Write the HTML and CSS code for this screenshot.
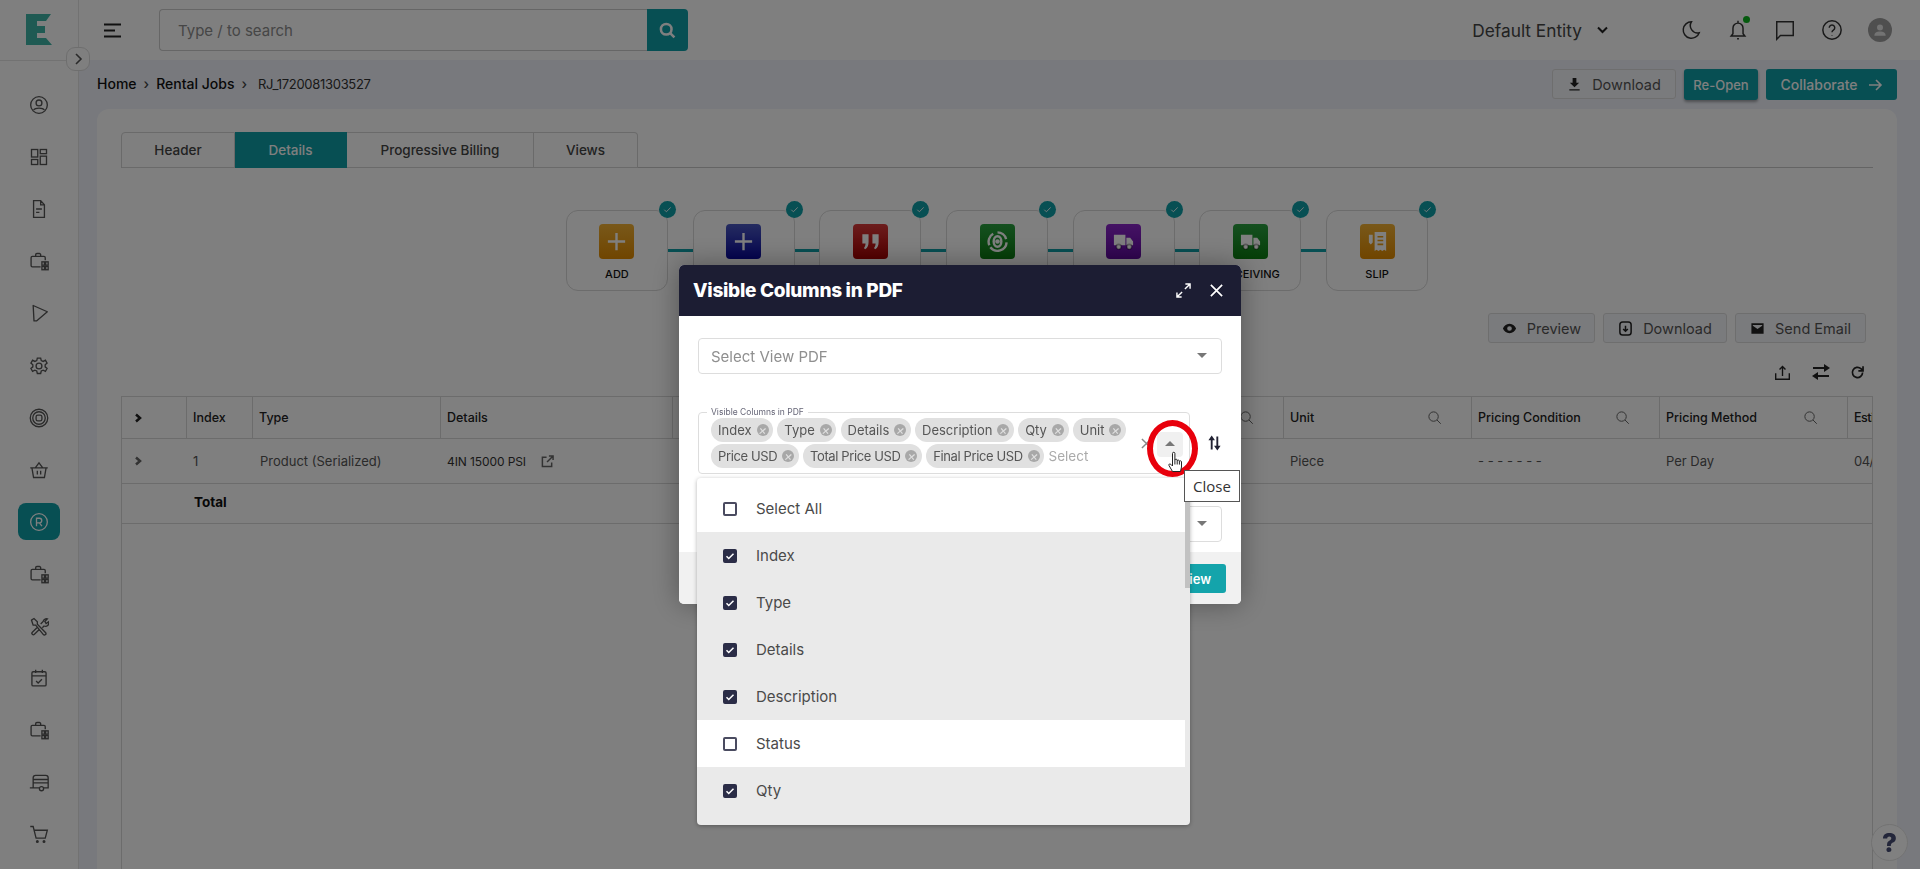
FILE: index.html
```html
<!DOCTYPE html>
<html lang="en">
<head>
    <meta charset="UTF-8">
    <meta name="viewport" content="width=device-width, initial-scale=1.0">
    <title>Rental Jobs</title>
    <link rel="stylesheet" href="styles.css">
</head>
<body>
    <svg class="sprite" width="0" height="0">
        <symbol id="i-case" viewBox="0 0 24 24"><path d="M14 19H4a1.500 1.500 0 0 1-1.500-1.500V8A1.500 1.500 0 0 1 4 6.500h14A1.500 1.500 0 0 1 19.500 8v3M8 6.500V4.500A1.500 1.500 0 0 1 9.500 3h3A1.500 1.500 0 0 1 14 4.500v2"/><rect x="15.500" y="13" width="3" height="4"/><rect x="20" y="13" width="3" height="4"/><rect x="15.500" y="18.500" width="3" height="4"/><rect x="20" y="18.500" width="3" height="4"/></symbol>
        <symbol id="i-truck" viewBox="0 0 24 24"><path fill="currentColor" stroke="none" d="M2 5h12v11H2zM15 8h4l3 4v4h-7z"/><circle cx="7" cy="17.500" r="2.500" fill="currentColor" stroke="#000" stroke-opacity=".3"/><circle cx="18" cy="17.500" r="2.500" fill="currentColor" stroke="#000" stroke-opacity=".3"/></symbol>
        <symbol id="i-lens" viewBox="0 0 24 24"><circle cx="10.500" cy="10.500" r="7.500"/><path d="M16 16l6 6"/></symbol>
        <symbol id="i-plus" viewBox="0 0 24 24"><path d="M12 3v18M3 12h18"/></symbol>
        <symbol id="i-check" viewBox="0 0 24 24"><path d="M5 12.500l4.500 4.500L19 7.500"/></symbol>
    </svg>

    <div class="app">
        <aside class="sidebar">
            <div class="logo">
                <svg width="26" height="31" viewBox="0 0 26 31"><path d="M0 0h25l-5 7h-9v5h8v7h-8v5h9l6 7H0z"/></svg>
            </div>
            <nav class="nav">
                <a class="nav-item"><svg viewBox="0 0 24 24"><circle cx="12" cy="12" r="10"/><circle cx="12" cy="9.500" r="3.500"/><path d="M5.500 18c2-3 11-3 13 0"/></svg></a>
                <a class="nav-item"><svg viewBox="0 0 24 24"><rect x="3" y="3" width="7.500" height="9"/><rect x="13.500" y="3" width="7.500" height="5"/><rect x="3" y="15" width="7.500" height="6"/><rect x="13.500" y="11" width="7.500" height="10"/></svg></a>
                <a class="nav-item"><svg viewBox="0 0 24 24"><path d="M14 2H5.500v20h13V7zM14 2v5h4.500M8.500 12h7M8.500 16h4"/></svg></a>
                <a class="nav-item"><svg><use href="#i-case"/></svg></a>
                <a class="nav-item"><svg viewBox="0 0 24 24"><path d="M5 3l17 7.500L9 21.500H6z" stroke-linejoin="round"/></svg></a>
                <a class="nav-item"><svg viewBox="0 0 24 24"><circle cx="12" cy="12" r="3.500"/><path d="M10 2.500h4l.7 3 2.300 1 2.700-1.500 2 3.500-2.300 2v2.500l2.300 2-2 3.500-2.700-1.500-2.300 1-.7 3h-4l-.7-3-2.300-1-2.700 1.500-2-3.500 2.300-2v-2.500l-2.300-2 2-3.500L7 6.500l2.300-1z"/></svg></a>
                <a class="nav-item"><svg viewBox="0 0 24 24"><circle cx="12" cy="12" r="10.500"/><circle cx="12" cy="12" r="7.500"/><rect x="8.500" y="8.500" width="7" height="7" rx="2"/></svg></a>
                <a class="nav-item"><svg viewBox="0 0 24 24"><path d="M1.500 9.500h21M3.500 9.500l2 11.500h13l2-11.500M7.500 9.500L12 3.500l4.500 6M10 13v4.500M14 13v4.500"/></svg></a>
                <a class="nav-item nav-active"><svg viewBox="0 0 24 24"><circle cx="12" cy="12" r="10"/><path d="M9 17V7.500h3.500a2.800 2.800 0 0 1 0 5.600H9M12.500 13l3 4"/></svg></a>
                <a class="nav-item"><svg><use href="#i-case"/></svg></a>
                <a class="nav-item"><svg viewBox="0 0 24 24"><path d="M3 5l3-2 4 4v3L20 20a1.500 1.500 0 0 1-3 2L8 11H5zM14 9.500l3-3a4 4 0 0 1 5-3l-3 3 1.500 2.500 3-2a4 4 0 0 1-5.500 5l-2 2M9.500 14l-5.500 5.500a1.500 1.500 0 0 0 2.500 2.500L12 16.500"/></svg></a>
                <a class="nav-item"><svg viewBox="0 0 24 24"><rect x="3.500" y="4.500" width="17" height="17" rx="1.500"/><path d="M3.500 9.500h17M8 2v4M16 2v4M8.500 15.500l2.500 2.500 4.500-4.500"/></svg></a>
                <a class="nav-item"><svg><use href="#i-case"/></svg></a>
                <a class="nav-item"><svg viewBox="0 0 24 24" stroke-width="2"><path d="M5 19V7a3 3 0 0 1 3-3h12a3 3 0 0 1 3 3v12h-5M5 9h18M5 13h18M1 19h11"/><circle cx="15" cy="20" r="2.500"/></svg></a>
                <a class="nav-item"><svg viewBox="0 0 24 24"><path d="M1.500 3h3.500l3.500 14h11l2.500-9.500H6"/><circle cx="10" cy="21" r="1" fill="currentColor"/><circle cx="18" cy="21" r="1" fill="currentColor"/></svg></a>
            </nav>
        </aside>
        <button class="side-toggle"><svg width="9" height="14" viewBox="0 0 9 14"><path d="M2 2l5 5-5 5"/></svg></button>

        <div class="main">
            <header class="topbar">
                <svg class="menu-icon" width="18" height="15" viewBox="0 0 18 15"><path d="M0 1.500h17M0 7.500h11M0 13.500h17"/></svg>
                <div class="search">
                    <input class="search-input" type="text" placeholder="Type / to search">
                    <button class="search-btn"><svg width="17" height="17" viewBox="0 0 16 16"><circle cx="6.800" cy="6.800" r="5"/><path d="M10.500 10.500l4 4"/></svg></button>
                </div>
                <div class="entity">
                    <span>Default Entity</span>
                    <svg width="13" height="8" viewBox="0 0 12 8"><path d="M1.500 1.500L6 6l4.500-4.500"/></svg>
                </div>
                <div class="top-icons">
                    <svg viewBox="0 0 24 24"><path d="M12.500 3a9 9 0 1 0 8.500 12A8 8 0 0 1 12.500 3z"/></svg>
                    <span class="bell">
                        <svg viewBox="0 0 24 24"><path d="M4.500 18.500h15l-2-2.500V10a5.500 5.500 0 0 0-11 0v6zM12 2v2.500M11 21.500h2"/></svg>
                        <i class="bell-dot"></i>
                    </span>
                    <svg viewBox="0 0 24 24"><path d="M3 3h18v15H7l-4 4z"/></svg>
                    <svg viewBox="0 0 24 24"><circle cx="12" cy="12" r="10"/><path d="M9 9.500a3 3 0 1 1 4.500 2.600c-1 .6-1.500 1.200-1.500 2.400M12 17.500v.5"/></svg>
                    <span class="avatar"><svg viewBox="0 0 24 24"><circle cx="12" cy="8.500" r="4"/><path d="M4.500 19.500c0-4 3-5.500 7.500-5.500s7.500 1.500 7.500 5.500z"/></svg></span>
                </div>
            </header>

            <div class="crumb-row">
                <div class="crumbs">
                    <a>Home</a><span class="crumb-sep">›</span><a>Rental Jobs</a><span class="crumb-sep crumb-sep-last">›</span><span class="crumb-last">RJ_1720081303527</span>
                </div>
                <div class="crumb-actions">
                    <button class="btn-light btn-dl"><svg class="solid-icon" viewBox="0 0 16 16"><path d="M6 1h4v5h3l-5 5-5-5h3zM2.500 13h11v1.500h-11z"/></svg>Download</button>
                    <button class="btn-teal btn-reopen">Re-Open</button>
                    <button class="btn-teal btn-collab">Collaborate <svg width="15" height="14" viewBox="0 0 15 14"><path d="M1 7h12M8 2l5 5-5 5"/></svg></button>
                </div>
            </div>

            <section class="card">
                <div class="tabs">
                    <a class="tab tab-header">Header</a>
                    <a class="tab tab-active tab-details">Details</a>
                    <a class="tab tab-billing">Progressive Billing</a>
                    <a class="tab tab-views">Views</a>
                </div>

                <div class="stepper">
                    <div class="step"><i class="step-check"><svg><use href="#i-check"/></svg></i><span class="step-icon amber"><svg class="white-line"><use href="#i-plus"/></svg></span><b>ADD</b></div>
                    <i class="step-line"></i>
                    <div class="step"><i class="step-check"><svg><use href="#i-check"/></svg></i><span class="step-icon blue"><svg class="white-line"><use href="#i-plus"/></svg></span><b>JOB</b></div>
                    <i class="step-line"></i>
                    <div class="step"><i class="step-check"><svg><use href="#i-check"/></svg></i><span class="step-icon red"><svg viewBox="0 0 24 24"><path class="white-fill" d="M3.500 4.500h6.500v8c0 3.500-1 6-3.500 7.500l-1.500-1.200c1.200-1.300 1.800-2.800 1.800-4.800H3.500zM14 4.500h6.500v8c0 3.500-1 6-3.500 7.500l-1.500-1.200c1.200-1.300 1.800-2.800 1.800-4.800H14z"/></svg></span><b>QUOTE</b></div>
                    <i class="step-line"></i>
                    <div class="step"><i class="step-check"><svg><use href="#i-check"/></svg></i><span class="step-icon green"><svg class="white-line" viewBox="0 0 24 24"><path d="M12 2.500a9.500 9.500 0 0 1 9 7M21.500 13a9.500 9.500 0 0 1-17 5M3.500 16a9.500 9.500 0 0 1 4-12"/><ellipse cx="12" cy="12" rx="4" ry="5.500"/><circle cx="12" cy="12" r="1.200"/></svg></span><b>ORDER</b></div>
                    <i class="step-line"></i>
                    <div class="step"><i class="step-check"><svg><use href="#i-check"/></svg></i><span class="step-icon purple"><svg class="truck"><use href="#i-truck"/></svg></span><b>SHIPPING</b></div>
                    <i class="step-line"></i>
                    <div class="step"><i class="step-check"><svg><use href="#i-check"/></svg></i><span class="step-icon green"><svg class="truck"><use href="#i-truck"/></svg></span><b>RECEIVING</b></div>
                    <i class="step-line"></i>
                    <div class="step"><i class="step-check"><svg><use href="#i-check"/></svg></i><span class="step-icon amber"><svg viewBox="0 0 24 24"><path class="white-fill" d="M9 2h12v20l-2-1.500-2 1.500-2-1.500-2 1.500-2-1.500L9 22zM3 5h4v8l-2 2-2-2z"/><path class="amber-line" d="M12 7h6M12 11h6M12 15h6"/></svg></span><b>SLIP</b></div>
                </div>

                <div class="doc-actions">
                    <button class="btn-light btn-preview"><svg class="solid-icon" viewBox="0 0 16 16"><path fill-rule="evenodd" d="M8 3c3.500 0 6 2.500 7 5-1 2.500-3.500 5-7 5s-6-2.500-7-5c1-2.500 3.500-5 7-5zm0 2.500a2.500 2.500 0 1 0 0 5 2.500 2.500 0 0 0 0-5z"/></svg>Preview</button>
                    <button class="btn-light btn-down"><svg viewBox="0 0 16 16"><rect x="2" y="1" width="12" height="14" rx="3"/><path d="M8 5v6M5.500 8.500L8 11l2.500-2.500"/></svg>Download</button>
                    <button class="btn-light btn-mail"><svg class="solid-icon" viewBox="0 0 16 16"><path fill-rule="evenodd" d="M1.500 2.500h13v11h-13zM3 5l5 3.500L13 5v-.8H3z"/></svg>Send Email</button>
                </div>

                <div class="table-tools">
                    <svg viewBox="0 0 20 20"><path d="M2 11v7h16v-7M10 14V3M6.500 6.500L10 3l3.500 3.500"/></svg>
                    <svg class="swap" viewBox="0 0 20 20"><path d="M2 6h12M18 14H6" stroke-width="2"/><path class="solid-icon" d="M13 2l6 4-6 4zM7 10l-6 4 6 4z"/></svg>
                    <svg viewBox="0 0 20 20"><path d="M16 10a6 6 0 1 1-2-4.500L16.500 8M16.500 2.500V8H11" stroke-width="2"/></svg>
                </div>

                <div class="table">
                    <div class="tr th-row">
                        <div class="cell c-arrow"><svg class="row-arrow" viewBox="0 0 10 10"><path d="M3 1.500L7 5 3 8.500"/></svg></div>
                        <div class="cell c-index">Index</div>
                        <div class="cell c-type">Type</div>
                        <div class="cell c-details">Details</div>
                        <div class="cell c-desc">Description<svg class="th-lens"><use href="#i-lens"/></svg></div>
                        <div class="cell c-qty">Qty<svg class="th-lens"><use href="#i-lens"/></svg></div>
                        <div class="cell c-unit">Unit<svg class="th-lens"><use href="#i-lens"/></svg></div>
                        <div class="cell c-unit">Pricing Condition<svg class="th-lens"><use href="#i-lens"/></svg></div>
                        <div class="cell c-unit">Pricing Method<svg class="th-lens"><use href="#i-lens"/></svg></div>
                        <div class="cell c-est">Esti</div>
                    </div>
                    <div class="tr td-row">
                        <div class="cell c-arrow"><svg class="row-arrow row-arrow-soft" viewBox="0 0 10 10"><path d="M3 1.500L7 5 3 8.500"/></svg></div>
                        <div class="cell c-index">1</div>
                        <div class="cell c-type">Product (Serialized)</div>
                        <div class="cell c-details"><span class="part-no">4IN 15000 PSI</span> <svg class="ext-link" viewBox="0 0 14 14"><path d="M6 2.500H1.500v10h10V8M8.500 1h4.500v4.500M13 1L6.500 7.500"/></svg></div>
                        <div class="cell c-desc"></div>
                        <div class="cell c-qty"></div>
                        <div class="cell c-unit">Piece</div>
                        <div class="cell c-unit">- - - - - - -</div>
                        <div class="cell c-unit">Per Day</div>
                        <div class="cell c-est">04/</div>
                    </div>
                    <div class="total-row"><b>Total</b></div>
                </div>
            </section>
        </div>
    </div>

    <div class="overlay">
        <div class="modal">
            <div class="modal-head">
                <h2>Visible Columns in PDF</h2>
                <svg class="head-icon" viewBox="0 0 16 16"><path d="M9.500 6.500L15 1M10 1h5v5M6.500 9.500L1 15M1 10v5h5"/></svg>
                <svg class="head-icon head-close" viewBox="0 0 16 16"><path d="M2 2l12 12M14 2L2 14"/></svg>
            </div>
            <div class="modal-body">
                <div class="select-box">Select View PDF<i class="caret"></i></div>
                <div class="multi-row">
                    <div class="multi-field">
                        <span class="legend">Visible Columns in PDF</span>
                        <div class="chips">
                            <span class="chip">Index<i class="chip-x"></i></span>
                            <span class="chip">Type<i class="chip-x"></i></span>
                            <span class="chip">Details<i class="chip-x"></i></span>
                            <span class="chip">Description<i class="chip-x"></i></span>
                            <span class="chip">Qty<i class="chip-x"></i></span>
                            <span class="chip">Unit<i class="chip-x"></i></span>
                            <span class="chip chip-usd">Price USD<i class="chip-x"></i></span>
                            <span class="chip chip-usd">Total Price USD<i class="chip-x"></i></span>
                            <span class="chip chip-usd">Final Price USD<i class="chip-x"></i></span>
                            <span class="chip-ph">Select</span>
                        </div>
                        <svg class="clear-x" viewBox="0 0 12 12"><path d="M1 1l10 10M11 1L1 11"/></svg>
                        <span class="caret-btn"><i class="caret caret-up"></i></span>
                    </div>
                    <svg class="sort-icon" viewBox="0 0 16 18"><path d="M5 16V4M11 2v12" stroke-width="2"/><path class="solid-icon" d="M1.500 6L5 1l3.500 5zM7.500 12h7L11 17z"/></svg>
                </div>
                <div class="select-box select-low"><i class="caret"></i></div>
            </div>
            <div class="modal-foot"><button class="btn-preview-main">Preview</button></div>
        </div>

        <div class="dropdown">
            <div class="dd-row"><i class="box"></i>Select All</div>
            <div class="dd-row dd-on"><i class="box box-on"><svg><use href="#i-check"/></svg></i>Index</div>
            <div class="dd-row dd-on"><i class="box box-on"><svg><use href="#i-check"/></svg></i>Type</div>
            <div class="dd-row dd-on"><i class="box box-on"><svg><use href="#i-check"/></svg></i>Details</div>
            <div class="dd-row dd-on"><i class="box box-on"><svg><use href="#i-check"/></svg></i>Description</div>
            <div class="dd-row"><i class="box"></i>Status</div>
            <div class="dd-row dd-on"><i class="box box-on"><svg><use href="#i-check"/></svg></i>Qty</div>
            <i class="dd-thumb"></i>
        </div>

        <i class="red-ring"></i>
        <svg class="hand" viewBox="0 0 16 22"><path d="M5 20.500l-3.500-6c-.6-1.200.8-2.200 1.800-1.200L5 15V2.500a1.200 1.200 0 0 1 2.400 0V9a1.200 1.200 0 0 1 2.300 0v.8a1.200 1.200 0 0 1 2.200 0v.8a1.100 1.100 0 0 1 2.100 0V16l-1 4.500zM7.400 9v4.500M9.700 9.800v3.700M11.900 10.600v3"/></svg>
        <div class="tooltip">Close</div>
    </div>

    <button class="help-fab">?</button>
</body>
</html>
```

FILE: styles.css
```css
* {
    box-sizing: border-box;
}

body {
    margin: 0;
    height: 869px;
    overflow: hidden;
    font-family: Inter, "Open Sans", sans-serif;
    color: #333;
    background: #f0f3fb;
}

.sprite {
    position: absolute;
}

button {
    font-family: inherit;
    cursor: pointer;
}

svg {
    fill: none;
    stroke: currentColor;
    stroke-width: 1.6;
}

.app {
    display: flex;
    height: 869px;
}

/* sidebar */
.sidebar {
    width: 79px;
    flex-shrink: 0;
    background: #fff;
    border-right: 1px solid #e4e4e4;
}

.logo {
    height: 61px;
    padding: 14px 0 0 26px;
    border-bottom: 1px solid #e4e4e4;
}

.logo svg {
    display: block;
    stroke: none;
    fill: #3fb5a6;
}

.nav {
    padding-top: 18px;
    display: grid;
    grid-auto-rows: 52.1px;
    justify-items: center;
    align-items: center;
}

.nav-item {
    width: 42px;
    height: 37px;
    display: flex;
    align-items: center;
    justify-content: center;
    color: #555;
    border-radius: 8px;
}

.nav-item svg {
    width: 20px;
    height: 20px;
}

.nav-active {
    background: #0e9ea6;
    color: #fff;
}

.side-toggle {
    position: absolute;
    left: 66px;
    top: 47px;
    width: 24px;
    height: 24px;
    padding: 0;
    display: flex;
    align-items: center;
    justify-content: center;
    background: #fff;
    border: 1px solid #ddd;
    border-radius: 9px;
    color: #555;
}

/* top bar */
.main {
    flex: 1;
    min-width: 0;
}

.topbar {
    height: 60px;
    background: #fff;
    display: flex;
    align-items: center;
    padding: 0 28px 0 25px;
}

.menu-icon {
    stroke-width: 2;
    color: #222;
}

.search {
    display: flex;
    width: 529px;
    height: 42px;
    margin-left: 37px;
}

.search-input {
    flex: 1;
    min-width: 0;
    border: 1px solid #ccc;
    border-right: 0;
    border-radius: 4px 0 0 4px;
    padding: 0 18px;
    font: 15px Inter, sans-serif;
}

.search-input::placeholder {
    color: #8c8c8c;
}

.search-btn {
    width: 41px;
    border: 0;
    padding: 0;
    background: #0e9ea6;
    border-radius: 0 4px 4px 0;
    color: #fff;
}

.search-btn svg {
    stroke-width: 2.4;
    vertical-align: middle;
}

.entity {
    margin-left: auto;
    display: flex;
    align-items: center;
    gap: 14px;
    font-size: 17.300px;
    color: #444;
}

.entity svg {
    stroke-width: 2;
    color: #222;
}

.top-icons {
    display: flex;
    align-items: center;
    gap: 25px;
    margin-left: 71px;
    color: #333;
}

.top-icons > svg,
.bell > svg {
    display: block;
    width: 22px;
    height: 22px;
}

.bell {
    position: relative;
}

.bell-dot {
    position: absolute;
    right: -1px;
    top: -3px;
    width: 7px;
    height: 7px;
    border-radius: 50%;
    background: #0bb51d;
}

.avatar {
    width: 24px;
    height: 24px;
    border-radius: 50%;
    background: #9e9e9e;
    display: block;
    padding: 3px;
}

.avatar svg {
    display: block;
    fill: #e6e6e6;
    stroke: none;
}

/* breadcrumb */
.crumb-row {
    display: flex;
    align-items: flex-start;
    height: 49px;
    padding: 9px 23px 0 18px;
}

.crumbs {
    font-size: 14px;
    font-weight: 500;
    line-height: 30px;
    color: #111;
}

.crumb-sep {
    margin: 0 7px;
    color: #444;
}

.crumb-sep-last {
    margin-right: 11px;
}

.crumb-last {
    font-size: 13px;
    letter-spacing: -0.3px;
    font-weight: 400;
    color: #333;
}

.crumb-actions {
    margin-left: auto;
    display: flex;
    gap: 8px;
}

.btn-light {
    height: 30px;
    display: flex;
    align-items: center;
    justify-content: center;
    gap: 10px;
    background: #f5f6fa;
    border: 1px solid #ddd;
    border-radius: 3px;
    font-size: 14.500px;
    color: #555;
    padding: 0;
}

.btn-light svg {
    width: 15px;
    height: 15px;
    color: #222;
}

.solid-icon {
    fill: #222;
    stroke: none;
}

.btn-teal {
    height: 31px;
    display: flex;
    align-items: center;
    justify-content: center;
    gap: 10px;
    border: 0;
    border-radius: 3px;
    background: #0e9ea6;
    color: #fff;
    font-weight: 500;
    font-size: 14px;
    padding: 0;
}

.btn-dl {
    width: 124px;
}

.btn-reopen {
    width: 74px;
    font-size: 13px;
    box-shadow: 0 2px 3px rgba(0, 0, 0, 0.35);
}

.btn-collab {
    width: 131px;
}

/* card */
.card {
    display: flex;
    flex-direction: column;
    margin: 0 23px 0 18px;
    height: 760px;
    background: #fff;
    border-radius: 12px 12px 0 0;
    padding: 23px 24px 0;
    overflow: hidden;
}

.tabs {
    display: flex;
    height: 36px;
    flex-shrink: 0;
    border-bottom: 1px solid #c8c8c8;
}

.tab {
    height: 36px;
    display: flex;
    align-items: center;
    justify-content: center;
    font-size: 13.500px;
    font-weight: 500;
    color: #444;
    border: 1px solid #d4d4d4;
    border-left: 0;
}

.tab-active {
    background: #0e9ea6;
    border-color: #0e9ea6;
    color: #fff;
}

.tab-header {
    width: 114px;
    border-left: 1px solid #d4d4d4;
    border-radius: 4px 0 0 0;
}

.tab-details {
    width: 112px;
}

.tab-billing {
    width: 187px;
}

.tab-views {
    width: 104px;
    border-radius: 0 4px 0 0;
}

/* stepper */
.stepper {
    margin-top: 42px;
    height: 81px;
    flex-shrink: 0;
    display: flex;
    justify-content: center;
    align-items: center;
}

.step {
    position: relative;
    width: 102px;
    height: 81px;
    border: 1px solid #d8d8d8;
    border-radius: 12px;
    padding-top: 13px;
    display: flex;
    flex-direction: column;
    align-items: center;
}

.step b {
    margin-top: 8px;
    font-size: 11px;
    font-weight: 500;
    color: #111;
}

.step-line {
    width: 24.700px;
    height: 3px;
    background: #0e9ea6;
}

.step-check {
    position: absolute;
    right: -9px;
    top: -10px;
    width: 17px;
    height: 17px;
    border-radius: 50%;
    background: #0e9ea6;
    padding: 3px;
    color: #fff;
}

.step-check svg {
    display: block;
    width: 11px;
    height: 11px;
    stroke-width: 2;
}

.step-icon {
    width: 35px;
    height: 35px;
    border-radius: 4px;
    padding: 6px;
    color: #fff;
}

.step-icon svg {
    display: block;
    width: 23px;
    height: 23px;
}

.white-line {
    stroke-width: 2.500;
    color: #fff;
}

.white-fill {
    fill: #fff;
    stroke: none;
}

.amber-line {
    stroke: #e99a10;
}

.truck {
    stroke: none;
    color: #fff;
}

.amber {
    background: linear-gradient(#f2b134, #e08a00);
}

.blue {
    background: linear-gradient(#4a58c0, #0808a0);
}

.red {
    background: linear-gradient(#d83a3a, #a80000);
}

.green {
    background: linear-gradient(#2aa040, #0a7d10);
}

.purple {
    background: linear-gradient(#8a25c8, #600aa0);
}

/* doc actions */
.doc-actions {
    margin-top: 22px;
    display: flex;
    flex-shrink: 0;
    justify-content: flex-end;
    gap: 8px;
    padding-right: 7px;
}

.btn-preview {
    width: 107px;
}

.btn-down {
    width: 124px;
}

.btn-mail {
    width: 131px;
}

.table-tools {
    margin-top: 19px;
    height: 20px;
    flex-shrink: 0;
    display: flex;
    justify-content: flex-end;
    align-items: center;
    gap: 20px;
    padding-right: 7px;
    color: #222;
}

.table-tools svg {
    width: 17px;
    height: 17px;
}

.table-tools .swap {
    width: 20px;
    height: 20px;
    margin: 0 -2px 0 0;
}

/* table */
.table {
    flex: 1;
    margin-top: 14px;
    border: 1px solid #d8d8d8;
    border-width: 1px 1px 0;
    overflow: hidden;
    font-size: 13px;
}

.tr {
    display: flex;
    border-bottom: 1px solid #d8d8d8;
}

.th-row {
    height: 42px;
    font-size: 12.500px;
    font-weight: 500;
    color: #222;
}

.td-row {
    height: 45px;
    color: #555;
}

.cell {
    flex-shrink: 0;
    display: flex;
    align-items: center;
    padding: 0 6px;
    white-space: nowrap;
}

.th-row .cell {
    border-right: 1px solid #d8d8d8;
    justify-content: space-between;
}

.td-row .c-type {
    padding-left: 7px;
}

.c-arrow {
    width: 65px;
    padding-left: 11px;
}

.c-index {
    width: 66px;
}

.c-type {
    width: 188px;
}

.c-details {
    width: 232px;
}

.td-row .c-details {
    color: #333;
    justify-content: flex-start;
    gap: 15px;
}

.part-no {
    font-size: 12px;
    letter-spacing: -0.1px;
}

.c-desc {
    width: 300px;
}

.c-qty {
    width: 311px;
}

.c-unit {
    width: 188px;
}

.c-est {
    width: 40px;
    letter-spacing: -0.5px;
}

.th-lens {
    width: 15px;
    height: 15px;
    margin-right: 23px;
    color: #666;
    stroke-width: 1.6;
}

.row-arrow {
    width: 10px;
    height: 10px;
    stroke-width: 2.500;
    color: #222;
}

.row-arrow-soft {
    color: #666;
}

.ext-link {
    width: 13px;
    height: 13px;
    color: #666;
}

.total-row {
    height: 40px;
    padding: 0 0 4px 72px;
    display: flex;
    align-items: center;
    border-bottom: 1px solid #d8d8d8;
    font-size: 13.500px;
    color: #111;
}

/* overlay and modal */
.overlay {
    position: fixed;
    left: 0;
    top: 0;
    width: 1920px;
    height: 869px;
    background: rgba(0, 0, 0, 0.5);
}

.modal {
    position: absolute;
    left: 679px;
    top: 265px;
    width: 562px;
    height: 339px;
    background: #fff;
    border-radius: 5px;
    overflow: hidden;
    box-shadow: 0 0 28px rgba(0, 0, 0, 0.35);
    display: flex;
    flex-direction: column;
}

.modal-head {
    height: 51px;
    flex-shrink: 0;
    background: #1c1d33;
    color: #fff;
    display: flex;
    align-items: center;
    padding: 0 17px 0 14px;
}

.modal-head h2 {
    margin: 0 auto 0 0;
    font-size: 19px;
    font-weight: 800;
    letter-spacing: -0.3px;
}

.head-icon {
    width: 15px;
    height: 15px;
    stroke-width: 1.500;
}

.head-close {
    margin-left: 18px;
    stroke-width: 1.800;
}

.modal-body {
    flex: 1;
    padding: 22px 19px 0;
}

.select-box {
    position: relative;
    height: 36px;
    border: 1px solid #ddd;
    border-radius: 4px;
    padding: 0 12px;
    line-height: 36px;
    font-size: 15px;
    color: #8f8f8f;
}

.select-low {
    margin-top: 32px;
}

.caret {
    position: absolute;
    right: 14px;
    top: 14px;
    width: 0;
    height: 0;
    border: 5px solid transparent;
    border-top: 5px solid #777;
    border-bottom: 0;
}

.multi-row {
    display: flex;
    align-items: center;
    margin-top: 38px;
}

.multi-field {
    position: relative;
    width: 492px;
    height: 62px;
    border: 1px solid #ddd;
    border-radius: 4px;
    padding: 5px 0 0 12px;
}

.legend {
    position: absolute;
    left: 8px;
    top: -6px;
    background: #fff;
    padding: 0 4px;
    font-size: 8.500px;
    color: #667;
}

.chips {
    width: 425px;
    display: flex;
    flex-wrap: wrap;
    align-items: center;
    gap: 2px 4.200px;
}

.chip {
    height: 24px;
    display: flex;
    align-items: center;
    gap: 5px;
    padding: 0 4.600px 0 7px;
    background: #e0e0e0;
    border-radius: 12px;
    font-size: 13px;
    color: #555;
}

.chip-usd {
    letter-spacing: -0.38px;
}

.chip-x {
    position: relative;
    width: 12px;
    height: 12px;
    border-radius: 50%;
    background: #a8a8a8;
}

.chip-x::before {
    content: "×";
    position: absolute;
    left: 0;
    right: 0;
    top: -2px;
    text-align: center;
    color: #e0e0e0;
    font-size: 13px;
    line-height: 16px;
}

.chip-ph {
    font-size: 13.500px;
    color: #aaa;
}

.clear-x {
    position: absolute;
    left: 442px;
    top: 25px;
    width: 11px;
    height: 11px;
    color: #888;
}

.caret-btn {
    position: absolute;
    left: 458px;
    top: 19px;
    width: 26px;
    height: 25px;
    background: #f0f0f0;
    border-radius: 4px;
}

.caret-up {
    right: 8px;
    top: 9px;
    border-top: 0;
    border-bottom: 5px solid #777;
}

.sort-icon {
    width: 15px;
    height: 18px;
    margin-left: 17px;
    color: #223;
}

.sort-icon .solid-icon {
    fill: #223;
}

.modal-foot {
    height: 52px;
    background: #f1f1f1;
    display: flex;
    justify-content: flex-end;
    align-items: flex-start;
    padding: 12px 15px 0 0;
}

.btn-preview-main {
    width: 80px;
    height: 29px;
    border: 0;
    border-radius: 3px;
    background: #14a4ab;
    color: #fff;
    font-weight: 600;
    font-size: 13px;
}

.dropdown {
    position: absolute;
    left: 697px;
    top: 478px;
    width: 493px;
    height: 347px;
    background: #eaeaea;
    border-radius: 4px;
    overflow: hidden;
    padding-top: 7px;
    padding-right: 5px;
    box-shadow: 0 1px 4px rgba(0, 0, 0, 0.3);
}

.dropdown::before {
    content: "";
    position: absolute;
    left: 0;
    right: 5px;
    top: 0;
    height: 7px;
    background: #fff;
}

.dd-row {
    height: 47px;
    display: flex;
    align-items: center;
    gap: 19px;
    padding-left: 26px;
    background: #fff;
    font-size: 15px;
    color: #4a4a4a;
}

.dd-on {
    background: #eaeaea;
}

.box {
    width: 14px;
    height: 14px;
    border: 2px solid #4a4b60;
    border-radius: 2px;
    background: #fff;
    flex-shrink: 0;
}

.box-on {
    background: #2b2d47;
    border-color: #2b2d47;
    color: #fff;
}

.box-on svg {
    display: block;
    width: 12px;
    height: 12px;
    margin: -1px;
    stroke-width: 3;
}

.dd-thumb {
    position: absolute;
    right: 0;
    top: 0;
    width: 5px;
    height: 110px;
    background: #c2c2c2;
}

.red-ring {
    position: absolute;
    left: 1147px;
    top: 420px;
    width: 51px;
    height: 57px;
    border: 6px solid #e8000c;
    border-radius: 50%;
}

.hand {
    position: absolute;
    left: 1167px;
    top: 451px;
    width: 17px;
    height: 22px;
    fill: #fff;
    stroke: #222;
    stroke-width: 1;
}

.tooltip {
    position: absolute;
    left: 1184px;
    top: 470px;
    width: 56px;
    height: 32px;
    background: #fff;
    border: 1px solid #555;
    display: flex;
    align-items: center;
    justify-content: center;
    font: 15px "Open Sans", sans-serif;
    color: #333;
}

.help-fab {
    position: fixed;
    left: 1871px;
    top: 824px;
    width: 37px;
    height: 37px;
    border: 1px solid #737373;
    border-radius: 50%;
    background: #808080;
    color: #23263a;
    font-size: 26px;
    font-weight: 800;
    padding: 0;
}
```
